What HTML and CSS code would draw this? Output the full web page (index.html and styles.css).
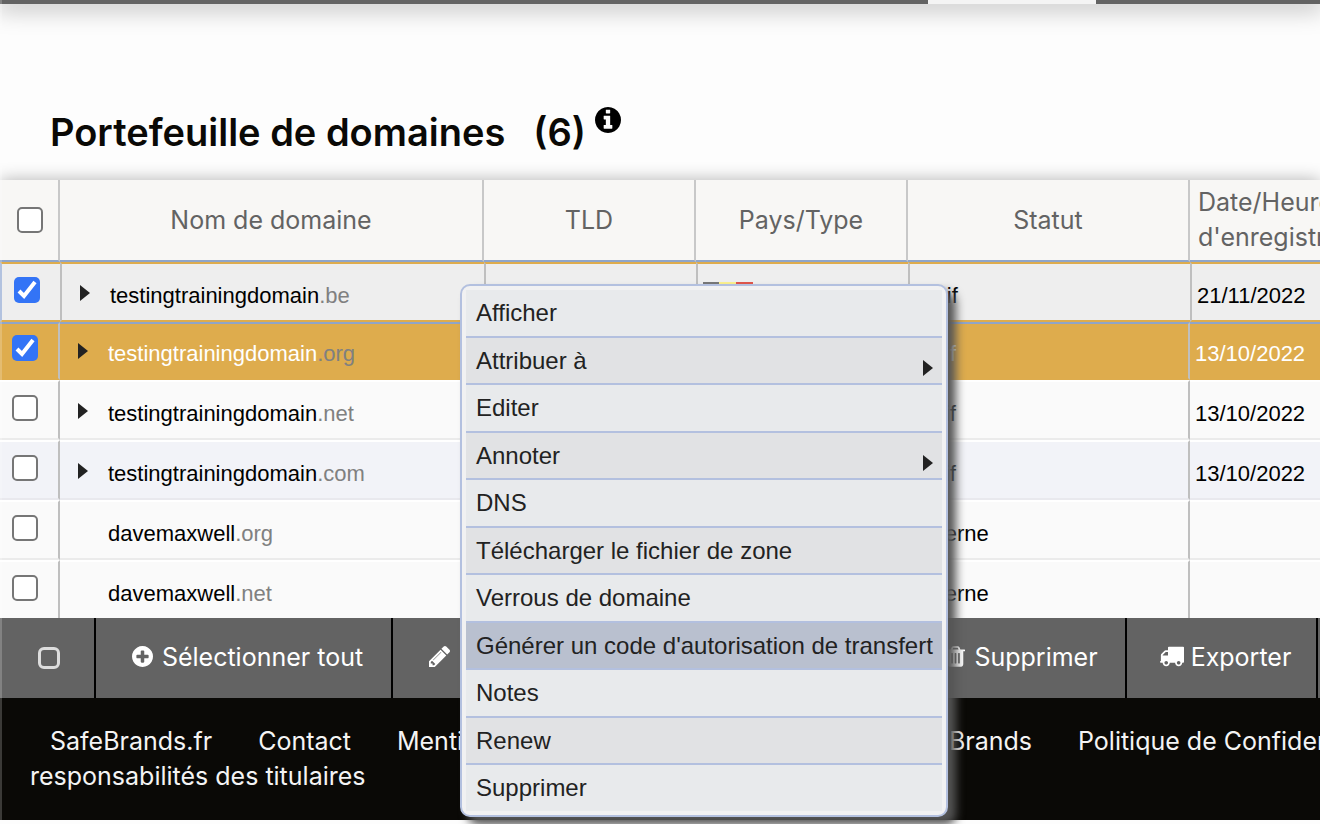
FILE: index.html
```html
<!DOCTYPE html>
<html lang="fr">

<head>
  <meta charset="UTF-8">
  <meta name="viewport" content="width=device-width, initial-scale=1.0">
  <title>Portefeuille de domaines</title>
  <link rel="stylesheet" href="styles.css">
</head>

<body>

  <div class="topbar">
    <div class="topbar-tab"></div>
  </div>

  <header class="page-title">
    <h1>Portefeuille de domaines</h1>
    <span class="count">(6)</span>
    <svg class="info" viewBox="128 128 1536 1536"><path d="M1152 1376v-160q0-14-9-23t-23-9h-96v-512q0-14-9-23t-23-9h-320q-14 0-23 9t-9 23v160q0 14 9 23t23 9h96v320h-96q-14 0-23 9t-9 23v160q0 14 9 23t23 9h448q14 0 23-9t9-23zm-128-896v-160q0-14-9-23t-23-9h-192q-14 0-23 9t-9 23v160q0 14 9 23t23 9h192q14 0 23-9t9-23zm640 416q0 209-103 385.5t-279.5 279.5-385.5 103-385.5-103-279.5-279.5-103-385.5 103-385.5 279.5-279.5 385.5-103 385.5 103 279.5 279.5 103 385.5z"/></svg>
  </header>

  <table class="domains">
    <colgroup>
      <col class="col-check">
      <col class="col-name">
      <col class="col-tld">
      <col class="col-type">
      <col class="col-status">
      <col>
    </colgroup>
    <thead>
      <tr>
        <th class="check"><input type="checkbox" aria-label="Tous les domaines"></th>
        <th>Nom de domaine</th>
        <th>TLD</th>
        <th>Pays/Type</th>
        <th>Statut</th>
        <th class="date">Date/Heure<br>d'enregistrement</th>
      </tr>
    </thead>
    <tbody>
      <tr class="current">
        <td class="check"><input type="checkbox" aria-label="testingtrainingdomain.be" checked></td>
        <td><div class="name"><svg class="arrow" viewBox="0 0 10 16"><path d="M0 0l10 8-10 8z"/></svg><span>testingtrainingdomain<i>.be</i></span></div></td>
        <td></td>
        <td class="type"><div class="flag"></div></td>
        <td>Actif</td>
        <td>21/11/2022</td>
      </tr>
      <tr class="selected">
        <td class="check"><input type="checkbox" aria-label="testingtrainingdomain.org" checked></td>
        <td><div class="name"><svg class="arrow" viewBox="0 0 10 16"><path d="M0 0l10 8-10 8z"/></svg><span>testingtrainingdomain<i>.org</i></span></div></td>
        <td></td>
        <td></td>
        <td>Actif</td>
        <td>13/10/2022</td>
      </tr>
      <tr>
        <td class="check"><input type="checkbox" aria-label="testingtrainingdomain.net"></td>
        <td><div class="name"><svg class="arrow" viewBox="0 0 10 16"><path d="M0 0l10 8-10 8z"/></svg><span>testingtrainingdomain<i>.net</i></span></div></td>
        <td></td>
        <td></td>
        <td>Actif</td>
        <td>13/10/2022</td>
      </tr>
      <tr class="even">
        <td class="check"><input type="checkbox" aria-label="testingtrainingdomain.com"></td>
        <td><div class="name"><svg class="arrow" viewBox="0 0 10 16"><path d="M0 0l10 8-10 8z"/></svg><span>testingtrainingdomain<i>.com</i></span></div></td>
        <td></td>
        <td></td>
        <td>Actif</td>
        <td>13/10/2022</td>
      </tr>
      <tr>
        <td class="check"><input type="checkbox" aria-label="davemaxwell.org"></td>
        <td><div class="name leaf"><span>davemaxwell<i>.org</i></span></div></td>
        <td></td>
        <td></td>
        <td>Externe</td>
        <td></td>
      </tr>
      <tr class="last">
        <td class="check"><input type="checkbox" aria-label="davemaxwell.net"></td>
        <td><div class="name leaf"><span>davemaxwell<i>.net</i></span></div></td>
        <td></td>
        <td></td>
        <td>Externe</td>
        <td></td>
      </tr>
    </tbody>
  </table>

  <div class="toolbar">
    <button class="tool-square" aria-label="Sélection"><span class="square"></span></button>
    <button class="tool-all">
      <svg viewBox="128 128 1536 1536"><path d="M1344 960v-128q0-26-19-45t-45-19h-256v-256q0-26-19-45t-45-19h-128q-26 0-45 19t-19 45v256h-256q-26 0-45 19t-19 45v128q0 26 19 45t45 19h256v256q0 26 19 45t45 19h128q26 0 45-19t19-45v-256h256q26 0 45-19t19-45zm320-64q0 209-103 385.5t-279.5 279.5-385.5 103-385.5-103-279.5-279.5-103-385.5 103-385.5 279.5-279.5 385.5-103 385.5 103 279.5 279.5 103 385.5z"/></svg>
      Sélectionner tout
    </button>
    <button class="tool-edit" aria-label="Editer">
      <svg viewBox="128 149 1515 1515"><path d="M491 1536l91-91-235-235-91 91v107h128v128h107zm523-928q0-22-22-22-10 0-17 7l-542 542q-7 7-7 17 0 22 22 22 10 0 17-7l542-542q7-7 7-17zm-54-192l416 416-832 832h-416v-416zm683 96q0 53-37 90l-166 166-416-416 166-165q36-38 90-38 53 0 91 38l235 234q37 39 37 91z"/></svg>
    </button>
    <button class="tool-delete">
      <svg class="trash" viewBox="192 128 1408 1536"><path d="M704 1376v-704q0-14-9-23t-23-9h-64q-14 0-23 9t-9 23v704q0 14 9 23t23 9h64q14 0 23-9t9-23zm256 0v-704q0-14-9-23t-23-9h-64q-14 0-23 9t-9 23v704q0 14 9 23t23 9h64q14 0 23-9t9-23zm256 0v-704q0-14-9-23t-23-9h-64q-14 0-23 9t-9 23v704q0 14 9 23t23 9h64q14 0 23-9t9-23zm-544-992h448l-48-117q-7-9-17-11h-317q-10 2-17 11zm928 32v64q0 14-9 23t-23 9h-96v948q0 83-47 143.5t-113 60.5h-832q-66 0-113-58.5t-47-141.5v-952h-96q-14 0-23-9t-9-23v-64q0-14 9-23t23-9h309l70-167q15-37 54-63t79-26h320q40 0 79 26t54 63l70 167h309q14 0 23 9t9 23z"/></svg>
      Supprimer
    </button>
    <button class="tool-export">
      <svg class="truck" viewBox="64 256 1728 1408"><path d="M640 1408q0-52-38-90t-90-38-90 38-38 90 38 90 90 38 90-38 38-90zm-384-512h384v-256h-158q-13 0-22 9l-195 195q-9 9-9 22v30zm1280 512q0-52-38-90t-90-38-90 38-38 90 38 90 90 38 90-38 38-90zm256-1088v1024q0 15-4 26.5t-13.5 18.5-16.5 11.5-23.5 6-22.5 2-25.5 0-22.5-.5q0 106-75 181t-181 75-181-75-75-181h-384q0 106-75 181t-181 75-181-75-75-181h-64q-3 0-22.5.5t-25.5 0-22.5-2-23.5-6-16.5-11.5-13.5-18.5-4-26.5q0-26 19-45t45-19v-320q0-8-.5-35t0-38 2.5-34.5 6.5-37 14-30.5 22.5-30l198-198q19-19 50.5-32t58.5-13h160v-192q0-26 19-45t45-19h1024q26 0 45 19t19 45z"/></svg>
      Exporter
    </button>
  </div>

  <footer class="footer">
    <nav>
      <a href="#">SafeBrands.fr</a>
      <a href="#">Contact</a>
      <a href="#">Mentions</a>
      <a href="#" class="brands">SafeBrands</a>
      <a href="#" class="privacy">Politique de Confidentialité</a>
    </nav>
    <a href="#">responsabilités des titulaires</a>
  </footer>

  <ul class="menu">
    <li><button>Afficher</button></li>
    <li><button>Attribuer à <svg class="arrow" viewBox="0 0 10 16"><path d="M0 0l10 8-10 8z"/></svg></button></li>
    <li><button>Editer</button></li>
    <li><button>Annoter <svg class="arrow" viewBox="0 0 10 16"><path d="M0 0l10 8-10 8z"/></svg></button></li>
    <li><button>DNS</button></li>
    <li><button>Télécharger le fichier de zone</button></li>
    <li><button>Verrous de domaine</button></li>
    <li><button class="active">Générer un code d'autorisation de transfert</button></li>
    <li><button>Notes</button></li>
    <li><button>Renew</button></li>
    <li><button>Supprimer</button></li>
  </ul>

</body>

</html>
```
FILE: styles.css
```css
* {
  box-sizing: border-box;
}

body {
  margin: 0;
  position: relative;
  min-height: 100vh;
  overflow: hidden;
  background-color: #fdfdfd;
  font-family: Inter, sans-serif;
  font-size: 25px;
}

/* light edge along the left side */
body::after {
  content: '';
  position: absolute;
  top: 0;
  bottom: 0;
  left: 0;
  width: 2px;
  background-color: rgba(255, 255, 255, 0.2);
}

.topbar {
  height: 4px;
  display: flex;
  justify-content: flex-end;
  padding-right: 224px;
  background-color: #636363;
  box-shadow: 0 0 24px 4px rgba(0, 0, 0, 0.35);
}

.topbar-tab {
  width: 168px;
  background-color: #f4f4f4;
}

.page-title {
  display: flex;
  align-items: flex-start;
  height: 176px;
  padding: 102px 50px 0;
  color: #0a0906;
  font-size: 38px;
  font-weight: 600;
  line-height: 52px;
}

h1 {
  margin: 0 28px 0 0;
  font-size: 38px;
  font-weight: 600;
}

.info {
  width: 26px;
  height: 26px;
  margin: 1px 0 0 9px;
}

.domains {
  width: 100%;
  table-layout: fixed;
  border-spacing: 0;
  box-shadow: 0 0 16px rgba(0, 0, 0, 0.3);
}

.col-check {
  width: 60px;
}

.col-name {
  width: 424px;
}

.col-tld,
.col-type {
  width: 212px;
}

.col-status {
  width: 282px;
}

th {
  height: 82px;
  padding: 0;
  border-right: 2px solid #c8c8c8;
  border-bottom: 2px solid #8fa5c9;
  background-color: #f8f7f5;
  color: #636363;
  font-weight: 400;
  line-height: 35px;
  white-space: nowrap;
}

th.date {
  padding-left: 8px;
  overflow: hidden;
  text-align: left;
}

th:last-child,
td:last-child {
  border-right: none;
}

td {
  height: 60px;
  padding: 19px 5px 0;
  overflow: hidden;
  vertical-align: top;
  border-top: 2px solid #fff;
  border-right: 2px solid #bfbfbf;
  border-bottom: 2px solid #ebebeb;
  background-color: #fafafa;
  font-family: "Liberation Sans", Arial, sans-serif;
  font-size: 22px;
  line-height: 26px;
}

td.check {
  padding: 13px 0 0 12px;
}

input[type="checkbox"] {
  appearance: none;
  display: block;
  width: 26px;
  height: 26px;
  margin: 0;
  border: 2px solid #767676;
  border-radius: 5px;
  background-color: #fff;
}

th input[type="checkbox"] {
  margin-left: 17px;
}

input[type="checkbox"]:checked {
  border: none;
  background: #3374f6 url("data:image/svg+xml,%3Csvg xmlns='http://www.w3.org/2000/svg' viewBox='0 0 26 26'%3E%3Cpath d='M5 14l5 5L21 5' fill='none' stroke='white' stroke-width='4'/%3E%3C/svg%3E");
}

.name {
  display: flex;
  align-items: center;
  gap: 20px;
  padding-left: 13px;
}

.name.leaf {
  padding-left: 43px;
}

.name i {
  color: #808080;
  font-style: normal;
}

.arrow {
  width: 10px;
  height: 16px;
  fill: #222;
}

.name .arrow {
  margin-bottom: 6px;
}

.current td {
  border-top: 2px solid #deac4d;
  border-right: none;
  border-bottom: 2px solid #deac4d;
  border-left: 2px solid #bfbfbf;
  background-color: #eee;
}

.current td.check {
  border-left-color: #9fb3d8;
}

.current td.type {
  padding-top: 18px;
}

.flag {
  width: 50px;
  height: 32px;
  background: linear-gradient(to right, #777 33%, #fbf08e 33%, #fbf08e 67%, #e0564b 67%);
}

.selected td {
  height: 58px;
  padding-top: 17px;
  border-top-color: #8fa5c9;
  border-bottom-color: #deac4d;
  background-color: #deac4d;
  color: #fff;
}

.selected td.check {
  padding-top: 11px;
}

.even td {
  border-bottom-color: #e9e9ee;
  background-color: #f2f3f8;
}

.last td {
  height: 58px;
  border-bottom: none;
}

button {
  border: none;
  color: inherit;
  font: inherit;
}

.toolbar {
  display: flex;
  height: 80px;
  background-color: #636363;
  color: #fff;
}

.toolbar button {
  display: flex;
  align-items: center;
  justify-content: center;
  gap: 9px;
  padding: 0 0 3px;
  border-right: 2px solid #000;
  background-color: #636363;
  white-space: nowrap;
}

.toolbar svg {
  flex: none;
  width: 21px;
  height: 21px;
  fill: #fff;
}

.toolbar .trash {
  width: 19px;
}

.toolbar .truck {
  width: 24px;
}

.toolbar .tool-square {
  width: 96px;
  padding: 0 0 0 4px;
}

.square {
  width: 22px;
  height: 22px;
  border: 3px solid #ddd;
  border-radius: 6px;
}

.toolbar .tool-all {
  width: 297px;
  padding-left: 8px;
}

.toolbar .tool-edit {
  flex: 1;
  justify-content: flex-start;
  padding-left: 36px;
}

.toolbar .tool-delete {
  width: 208px;
}

.toolbar .tool-export {
  width: 191px;
  margin-right: 2px;
  padding-left: 8px;
  gap: 7px;
}

.footer {
  min-height: 122px;
  padding: 26px 0 0 30px;
  background-color: #0a0906;
  color: #f4f4f4;
  line-height: 35px;
}

.footer a {
  color: inherit;
  text-decoration: none;
  white-space: nowrap;
}

.footer nav {
  display: flex;
  gap: 46px;
  padding-left: 20px;
}

.footer .brands {
  margin-left: auto;
}

.footer .privacy {
  width: 242px;
  overflow: hidden;
}

.menu {
  position: absolute;
  top: 284px;
  left: 460px;
  width: 488px;
  margin: 0;
  padding: 4px;
  border: 2px solid #b3c0df;
  border-radius: 10px;
  background-color: #f1f1f2;
  box-shadow: 8px 8px 10px #555;
  color: #222;
  font-family: "Liberation Sans", Arial, sans-serif;
  font-size: 24px;
  list-style: none;
}

.menu button {
  display: flex;
  align-items: center;
  justify-content: space-between;
  width: 100%;
  padding: 0 9px 0 10px;
  border-bottom: 2px solid #b3c0df;
  background-color: #e8eaec;
  line-height: 46px;
  text-align: left;
  white-space: nowrap;
}

.menu li:nth-child(even) button {
  background-color: #e1e2e4;
  line-height: 45px;
}

.menu .arrow {
  margin-top: 14px;
}

.menu li:nth-child(even) .active {
  border-color: #b3c0df;
  background-color: #b9c0cf;
}

.menu li:last-child button {
  border-bottom: none;
}
```
